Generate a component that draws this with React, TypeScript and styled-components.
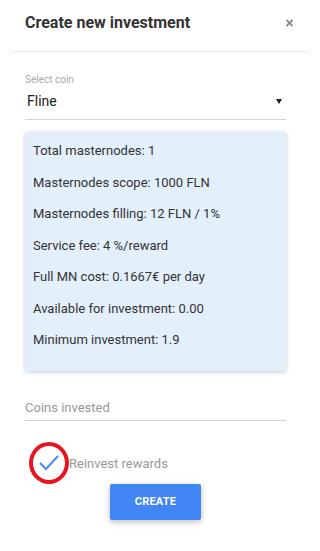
import React from "react";
import styled, { createGlobalStyle } from "styled-components";

const Global = createGlobalStyle`
  html, body { margin: 0; padding: 0; background: #fff; }
  body { font-family: Roboto, "Liberation Sans", Arial, sans-serif; }
  * { box-sizing: border-box; }
`;

const Modal = styled.div`
  width: 320px;
  min-height: 551px;
  background: #fff;
`;

const Header = styled.div`
  margin: 0 12px;
  height: 52px;
  padding: 13px 15px 0 13px;
  border-bottom: 1px solid #e5e5e5;
  display: flex;
  align-items: flex-start;
  justify-content: space-between;
`;

const Title = styled.h1`
  margin: 0;
  font-size: 16px;
  line-height: 19px;
  font-weight: 700;
  color: #333;
`;

const Close = styled.button`
  border: 0;
  background: none;
  padding: 0;
  margin-top: 6px;
  width: 7px;
  height: 8px;
  display: flex;
  cursor: pointer;
`;

const Body = styled.div`
  padding: 0 34px 0 25px;
  display: flex;
  flex-direction: column;
`;

const SmallLabel = styled.label`
  margin-top: 22px;
  font-size: 10px;
  line-height: 12px;
  color: #aaa;
`;

const SelectRow = styled.div`
  margin-top: 5px;
  height: 29px;
  padding: 0 4px 8px 2px;
  border-bottom: 1px solid #ccd3db;
  display: flex;
  align-items: center;
  justify-content: space-between;
  font-size: 14px;
  line-height: 20px;
  color: #222;
`;

const Caret = styled.span`
  width: 0;
  height: 0;
  border-left: 3px solid transparent;
  border-right: 3px solid transparent;
  border-top: 5px solid #222;
`;

const InfoBox = styled.div`
  margin-top: 12px;
  background: #e3f0fc;
  border-radius: 3px;
  box-shadow: 0 1px 4px rgba(0, 0, 0, 0.22);
  padding: 3px 8px 15px 8px;
`;

const InfoLine = styled.p`
  margin: 0;
  font-size: 13px;
  line-height: 31.5px;
  color: #333;
`;

const Field = styled.div`
  margin-top: 27px;
  padding-bottom: 2px;
  border-bottom: 1px solid #ccd3db;
  font-size: 13px;
  line-height: 20px;
  color: #999;
`;

const CheckRow = styled.div`
  margin-top: 21px;
  padding-left: 4px;
  height: 42px;
  display: flex;
  align-items: center;
`;

const Ring = styled.span`
  width: 40px;
  height: 42px;
  border: 4.5px solid #e8141f;
  border-radius: 50%;
  display: flex;
  align-items: center;
  justify-content: center;
`;

const CheckText = styled.span`
  margin-top: 2px;
  font-size: 13px;
  color: #999;
`;

const Button = styled.button`
  align-self: center;
  width: 91px;
  height: 36px;
  border: 0;
  border-radius: 2px;
  background: #4285f4;
  color: #fff;
  font-family: Roboto, "Liberation Sans", Arial, sans-serif;
  font-size: 11px;
  font-weight: 700;
  letter-spacing: 0.2px;
  box-shadow: 0 2px 5px rgba(0, 0, 0, 0.16), 0 2px 10px rgba(0, 0, 0, 0.12);
  cursor: pointer;
`;

const lines = [
  "Total masternodes: 1",
  "Masternodes scope: 1000 FLN",
  "Masternodes filling: 12 FLN / 1%",
  "Service fee: 4 %/reward",
  "Full MN cost: 0.1667€ per day",
  "Available for investment: 0.00",
  "Minimum investment: 1.9",
];

export default function App() {
  return (
    <>
      <Global />
      <Modal>
        <Header>
          <Title>Create new investment</Title>
          <Close aria-label="close">
            <svg width="7" height="8" viewBox="0 0 7 8">
              <path d="M0.5 1 L6.5 7 M6.5 1 L0.5 7" stroke="#888" strokeWidth="1.8" />
            </svg>
          </Close>
        </Header>
        <Body>
          <SmallLabel>Select coin</SmallLabel>
          <SelectRow>
            <span>Fline</span>
            <Caret />
          </SelectRow>
          <InfoBox>
            {lines.map((l) => (
              <InfoLine key={l}>{l}</InfoLine>
            ))}
          </InfoBox>
          <Field>Coins invested</Field>
          <CheckRow>
            <Ring>
              <svg width="22" height="18" viewBox="0 0 22 18">
                <path d="M2 9 L8 15 L20 2" fill="none" stroke="#4a8af4" strokeWidth="2" />
              </svg>
            </Ring>
            <CheckText>Reinvest rewards</CheckText>
          </CheckRow>
          <Button>CREATE</Button>
        </Body>
      </Modal>
    </>
  );
}
